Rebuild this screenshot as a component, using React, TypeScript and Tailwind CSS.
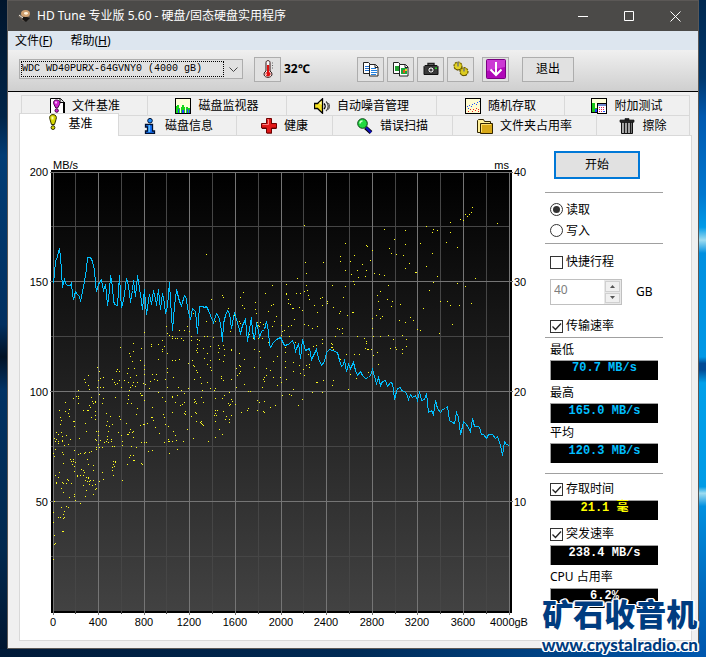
import { useState, type ReactNode } from 'react'
import clsx from 'clsx'

type IconProps = { children: ReactNode; className?: string }

const Icon = ({ children, className }: IconProps) => (
  <svg viewBox="0 0 16 16" className={clsx('h-4 w-4 shrink-0', className)} aria-hidden="true">
    {children}
  </svg>
)

const FileBenchIcon = () => (
  <Icon>
    <path d="M1.5.5h10l3 3v12h-13z" fill="#fff" stroke="#000" />
    <path d="M11 .5v4h4" fill="#ddd" stroke="#000" />
    <path d="M15.5 4v11.500H3" fill="none" stroke="#000" />
    <path d="M7.500 2C4.500 2 4 4.500 5 6.500L6.800 10h1.800L10.500 6.500c1-2 0-4.500-3-4.500z" fill="#d020d0" stroke="#400040" />
    <path d="M6 3.500h2v2H6z" fill="#ffb0ff" />
    <circle cx="7.700" cy="12.600" r="1.700" fill="#d020d0" stroke="#400040" />
  </Icon>
)

const MonitorIcon = () => (
  <Icon>
    <rect x=".5" y=".5" width="15" height="15" fill="#ffffd8" stroke="#000" />
    <g shapeRendering="crispEdges">
      <path d="M1 15V8h1V7h2v3h1v5zM6 15V9h1V7h2v2h1v6zM11 15V9h2v1h2v5z" fill="#18d818" />
      <path d="M3 15v-4h1v4zM7 15v-3h2v3zM12 15v-4h1v4zM14 15v-3h1v3z" fill="#2838ff" />
    </g>
  </Icon>
)

const SpeakerIcon = () => (
  <Icon>
    <path d="M.5 5.500h3L8.500.8v14.400L3.500 10.500h-3z" fill="#f4e020" stroke="#000" strokeWidth="1.300" />
    <path d="M5 5l2.500-2v4z" fill="#fffbb0" />
    <path d="M10 5.500c1.500 1.500 1.500 4 0 5.500" fill="none" stroke="#000" strokeWidth="1.400" />
    <path d="M12 3.500c3 2.500 3 7 0 9.500" fill="none" stroke="#444" strokeWidth="1.300" />
    <path d="M14.500 5c1.300 2 1.300 4.500 0 6.500" fill="none" stroke="#444" />
  </Icon>
)

const RandomIcon = () => (
  <Icon>
    <rect x=".5" y=".5" width="15" height="15" fill="#fffbd0" stroke="#000" />
    <g shapeRendering="crispEdges">
      <path d="M2 8h1v1H2zM4 7h1v1H4zM6 8h1v1H6zM7 6h1v1H7zM9 5h1v1H9zM11 6h1v1h-1zM12 4h1v1h-1zM14 3h1v1h-1zM3 10h1v1H3z" fill="#2050ff" />
      <path d="M3 13h1v1H3zM5 11h1v1H5zM7 13h1v1H7zM8 11h1v1H8zM10 12h1v1h-1zM11 10h1v1h-1zM13 11h1v1h-1zM13 13h1v1h-1z" fill="#f02020" />
    </g>
  </Icon>
)

const ExtraIcon = () => (
  <Icon>
    <rect x=".5" y=".5" width="15" height="14" fill="#ffffd8" stroke="#000" />
    <g shapeRendering="crispEdges">
      <path d="M1 14V5h3v5h2v4z" fill="#18c818" />
      <path d="M4 14v-3h2v3z" fill="#2838ff" />
    </g>
    <rect x="6.500" y="5.500" width="9" height="10" fill="#fff" stroke="#000" />
    <g shapeRendering="crispEdges">
      <path d="M7 6h8v2H7z" fill="#7088d0" />
      <path d="M8 9h1v1H8zM10 9h1v1h-1zM12 9h1v1h-1zM8 11h1v1H8zM10 11h1v1h-1zM12 11h1v1h-1zM8 13h1v1H8zM10 13h1v1h-1z" fill="#e02060" />
      <path d="M12 13h2v1h-2z" fill="#2050ff" />
    </g>
  </Icon>
)

const BulbIcon = () => (
  <Icon className="-mt-1">
    <path d="M8 .6C5 .6 4 3 5 5.500l1.500 5h3l1.500-5C12 3 11 .6 8 .6z" fill="#d8d800" stroke="#303000" />
    <path d="M6.500 2.500h2v3h-2z" fill="#ffffb0" />
    <circle cx="8" cy="13.600" r="1.900" fill="#d8d800" stroke="#303000" />
  </Icon>
)

const InfoIcon = () => (
  <Icon>
    <circle cx="8" cy="2.700" r="2.300" fill="#2090ff" stroke="#001030" />
    <path d="M3.500 6.500h7v6.500h2v2.500h-9V13h2V9h-2z" fill="#1878ff" stroke="#001030" strokeWidth="1.300" />
    <path d="M6.500 7H8v7H6.500z" fill="#60c0ff" />
  </Icon>
)

const HealthIcon = () => (
  <Icon>
    <path d="M6 1.500h5v4.500h4.500v5H11v4.500H6V11H1V6h5z" fill="#400000" />
    <path d="M5.500.5h5v5h5v4.500h-5v5h-5v-5h-5V5.500h5z" fill="#e01818" stroke="#700000" />
    <path d="M6.500 1.500h1v5h-6" fill="none" stroke="#ff8080" />
  </Icon>
)

const ScanIcon = () => (
  <Icon>
    <path d="M8.500 9.500l5.500 5" stroke="#000" strokeWidth="4" />
    <path d="M9 9.500l5 5" stroke="#1010c0" strokeWidth="2.400" />
    <circle cx="5.500" cy="5.500" r="4.800" fill="#20d840" stroke="#064010" />
    <path d="M3 5.500C3 4 4 3 5.500 3" fill="none" stroke="#c8ffc8" strokeWidth="1.500" />
  </Icon>
)

const FolderIcon = () => (
  <Icon>
    <path d="M.5 14.500v-12l1-1h5l1 2h6v11z" fill="#fff09a" stroke="#302400" />
    <path d="M3.500 15.500v-10h12v10z" fill="#d8a818" stroke="#302400" />
    <path d="M4.500 14V6.500H14" fill="none" stroke="#ffe070" />
  </Icon>
)

const TrashIcon = () => (
  <Icon>
    <path d="M2.500 4h11v11.500h-11z" fill="#8c8c8c" stroke="#111" />
    <path d="M5.500 4v11M8.500 4v11M11.500 4v11" stroke="#1c1c1c" strokeWidth="1.400" />
    <path d="M4 5v10M7 5v10M10 5v10" stroke="#d0d0d0" />
    <path d="M1 2h14v2.200H1zM6 .6h4V2H6z" fill="#2c2c2c" stroke="#111" strokeWidth=".7" />
  </Icon>
)

const ThermoIcon = () => (
  <svg viewBox="1 0 14 18" className="h-[18px] w-[14px] shrink-0" aria-hidden="true">
    <path d="M6 11V2.500c0-2.500 4-2.500 4 0V11c3.500 2.500 2 6.300-2 6.300S2.500 13.500 6 11z" fill="#f8f8f8" stroke="#301010" />
    <path d="M7 5h2.200v7c2.300 1 1.600 4.400-1.200 4.400s-3.500-3.400-1-4.400z" fill="#e01010" />
    <path d="M5.500 13.500h1.500v1.500H5.500z" fill="#ffb0b0" />
    <path d="M12 3h1M12 5.500h1M12 8h1" stroke="#666" />
  </svg>
)

const CopyTextIcon = () => (
  <Icon>
    <path d="M.5 1.500h5l2 2v9h-7z" fill="#fff" stroke="#222" />
    <path d="M2 5.500h4M2 7.500h4M2 9.500h4" stroke="#2070d0" />
    <path d="M6.500 3.500h6l2.500 2.500v9h-8.500z" fill="#fff" stroke="#222" />
    <path d="M8 7.500h5M8 9.500h6M8 11.500h6M8 13.500h5" stroke="#2080e0" />
    <path d="M12 3.500v3h3" fill="none" stroke="#222" />
  </Icon>
)

const CopyImageIcon = () => (
  <Icon>
    <path d="M.5 1.500h5l2 2v9h-7z" fill="#fff" stroke="#222" />
    <path d="M2 5h5v5H2z" fill="#20a030" />
    <path d="M6.500 3.500h6l2.500 2.500v9h-8.500z" fill="#fff" stroke="#222" />
    <path d="M8 7h6v6H8z" fill="#18a838" />
    <path d="M10 9h2v3h-2z" fill="#e05020" />
    <path d="M12 8h2v2h-2z" fill="#f0d020" />
    <path d="M12 3.500v3h3" fill="none" stroke="#222" />
  </Icon>
)

const CameraIcon = () => (
  <Icon>
    <path d="M5 4.500V2.500h6v2" fill="#777" stroke="#222" strokeWidth="1.400" />
    <path d="M1 5.500l1-1h12l1 1v8H1z" fill="#3a3a3a" stroke="#111" />
    <circle cx="8" cy="9" r="3.200" fill="#f4f4f4" stroke="#111" />
    <circle cx="8" cy="9" r="1.600" fill="#444" />
    <path d="M12 6.500h2v1.500h-2z" fill="#20d020" />
  </Icon>
)

const OptionsIcon = () => (
  <Icon>
    <circle cx="5" cy="5" r="4" fill="#d0c010" stroke="#706000" strokeDasharray="2 1" strokeWidth="1.200" />
    <circle cx="5" cy="5.500" r="3" fill="#e4d428" />
    <circle cx="11" cy="10.500" r="4" fill="#c8b810" stroke="#706000" strokeDasharray="2 1" strokeWidth="1.200" />
    <circle cx="11" cy="11" r="3" fill="#dccc20" />
    <path d="M5 1v4.500M11 7v3.500" stroke="#777" strokeWidth="1.500" />
    <path d="M2 7.500c1 1.500 4 2 5.500.5M8 13.500c1 1.300 4 1.800 6 0" fill="none" stroke="#605000" />
  </Icon>
)

const DownIcon = () => (
  <svg viewBox="0 0 20 20" className="h-5 w-5 shrink-0" aria-hidden="true">
    <rect x=".5" y=".5" width="19" height="19" rx="1" fill="#b008b8" stroke="#780080" />
    <path d="M1 1h18v7L1 12z" fill="#cc38d4" />
    <path d="M10 3v12M4.500 10.500l5.500 5.500 5.500-5.500" fill="none" stroke="#fff" strokeWidth="2" />
  </svg>
)

const AppIcon = () => (
  <Icon className="ml-[9px]">
    <path d="M1 8l5-3 7 3-3 4-4 1z" fill="#6c6258" />
    <path d="M7 8l6 2-4 4-4-3z" fill="#181614" />
    <ellipse cx="8.500" cy="5.500" rx="4.500" ry="3.500" fill="#cfa070" />
    <ellipse cx="9" cy="5.300" rx="2" ry="1.400" fill="#fff3de" />
    <path d="M2 7l4 3" stroke="#efe8de" />
  </Icon>
)

// Samples are stored in thirds of a pixel, each block relative to its own origin
type Block = { x: number; y: number; points: string }

const transferBlocks: Block[] = [
  {
    x: -12,
    y: -18,
    points:
      '101,400 107,335 112,318 116,305 118,296 121,318 124,365 127,411 130,398 133,388 137,400 142,406 150,406 154,401 158,430 161,447 166,424 172,434 177,438 181,454 186,425 193,395 198,355 202,323 210,322 216,335 223,358 227,400 230,424 235,402 239,397 243,388 247,405 251,422 256,404 259,430 262,467 267,420 271,376 276,410 280,450 284,463 292,466 298,376 301,430 304,472 309,450 314,430 319,385 326,405 331,458 336,420 341,391 346,440 352,376 358,415 363,455 367,478 373,418 376,460 379,494 384,450 389,432 395,464 400,422 406,445 409,465 415,418 421,479 427,430 432,460 437,490 441,470 448,396 452,450 458,540 463,470 470,419 477,455 483,465 492,436 498,445 503,475 511,508 518,475 525,485 532,551 538,470 548,468 553,471 558,468 565,480 572,495 581,517 585,500 590,490 596,500 600,520 607,575 611,520 616,495 623,480 628,490 635,536 643,488 650,508 655,530 661,550 668,525 676,508 679,540 683,575 687,535 693,502 698,545 703,567 710,517 714,540 718,563 724,545 732,537 739,515 744,545 749,583',
  },
  {
    x: 738,
    y: -18,
    points:
      '2,593 9,577 20,568 30,562 36,575 44,585 54,582 62,578 66,570 72,585 77,605 84,581 92,626 97,568 105,600 118,596 124,627 131,615 139,598 146,625 154,647 162,635 169,606 178,598 188,600 202,606 208,630 213,650 219,643 224,628 229,665 236,642 241,655 250,637 256,662 262,675 271,664 278,675 285,685 294,683 300,675 307,657 313,680 319,700 325,683 332,706 338,694 347,690 353,710 360,697 366,700 371,720',
  },
  {
    x: 738,
    y: 702,
    points:
      '374,28 378,5 382,-6 390,-8 393,0 404,3 410,10 416,28 422,12 428,22 437,15 442,30 448,5 453,30 464,27 470,10 475,66 484,62 490,74 497,30 503,55 511,66 518,58 526,55 532,49 539,92 548,98 554,100 559,68 565,82 571,132 576,110 581,95 590,103 600,123 607,86 613,108 625,108 629,113 635,134 641,134 649,145 655,132 668,132 676,145 683,139 690,165 697,196 703,155 710,163 717,166',
  },
]

const accessBlocks: Block[] = [
  {
    x: -12,
    y: -18,
    points:
      '559,313 574,448 607,436 610,442 626,475 670,427 661,442 737,430 706,457 667,466 673,475 706,478 709,489 745,484 520,490 535,517 586,514 559,514 610,514 643,496 661,520 712,517 721,517 730,524 715,526 658,515 373,547 439,529 502,529 478,541 493,541 508,544 442,550 448,556 457,559 427,571 457,565 466,565 472,565 484,565 490,570 514,559 514,571 532,568 538,571 553,559 562,559 580,562 631,544 688,553 703,562 700,565 715,565 727,565 745,577 718,529 340,580 394,583 394,589 415,583 301,592 364,595 427,597 433,589 427,604 328,611 331,619 340,604 337,634 361,631 373,646 373,659 415,628 442,610 457,631 466,631 478,628 505,640 517,631 520,646 523,649 532,583 532,595 529,601 532,607 550,595 562,610 571,589 553,625 571,631 595,586 598,594 610,586 613,598 634,598 613,616 634,601 595,607 598,628 610,634 562,643 571,652 574,661 658,610 673,628 658,646 661,649 649,655 703,598 718,604 721,622 739,655 703,652 232,652 238,664 292,658 298,664 289,664 325,655 343,655 349,676 442,655 442,667 205,676 193,688 196,697 235,691 241,685 250,682 277,688 283,697 286,703 292,700 298,691 313,691 322,670 331,682 340,697 325,697 352,697 373,673 397,673 409,673 403,688 412,691 376,703 460,682 436,688 391,694 532,667 529,661 523,688 544,700 562,697 541,682 604,679 604,685 610,691 634,688 652,676 658,670 673,703 661,664 730,688 733,682 739,676 733,694 206,706 208,718 232,712 241,712 250,712 304,712 331,712 337,706 346,709 370,700 388,715 442,712 475,712 505,715 571,715 586,715 649,712 727,712',
  },
  {
    x: 738,
    y: -18,
    points:
      '103,226 343,238 406,241 469,229 490,238 502,241 487,247 541,217 541,247 571,208 580,211 586,193 592,199 598,193 604,187 607,172 682,220 226,280 289,286 292,289 307,301 358,295 373,268 406,283 451,280 529,277 562,292 364,310 379,313 400,316 487,310 211,319 211,334 253,316 241,334 277,343 301,331 106,337 160,337 109,370 418,340 406,355 469,349 226,361 262,361 289,361 244,373 265,382 286,379 313,370 328,373 343,376 436,367 439,367 502,379 490,397 82,385 250,394 253,403 226,409 187,406 355,406 7,406 49,403 109,406 49,430 49,433 79,430 91,430 103,424 112,421 115,436 118,448 55,448 55,460 61,463 67,475 70,475 88,472 97,481 10,463 4,466 19,499 13,514 7,529 133,466 151,445 157,442 172,454 172,460 157,466 142,487 190,472 220,442 211,484 208,490 232,496 247,487 250,487 331,424 322,436 325,454 352,448 367,454 364,469 328,478 319,496 337,499 331,505 307,505 391,463 388,511 406,517 421,502 430,511 460,475 478,421 511,454 532,454 541,466 568,466 604,460 562,400 586,409 616,385 547,523 508,550 451,541 442,538 73,508 64,526 55,529 34,526 43,541 37,544 34,556 58,559 103,523 115,526 127,535 142,529 202,535 208,538 217,535 217,550 196,559 262,559 283,565 289,574 289,580 286,595 292,598 295,598 304,598 307,535 310,559 331,559 355,556 370,568 376,592 379,598 397,556 409,568 409,589 397,598 397,610 361,595 322,607 310,616 325,643 268,613 253,613 229,613 211,628 184,580 187,583 187,592 184,592 190,598 157,568 157,580 130,589 139,586 115,613 118,643 118,652 109,646 88,646 70,637 70,664 91,670 103,676 100,658 46,607 46,634 46,652 46,592 22,619 10,634 1,661 10,682 31,682 34,697 22,706 49,688 142,697 160,691 190,691 187,706 241,673 259,685 295,667 70,718 235,718 76,577 13,574 139,697',
  },
  {
    x: -12,
    y: 702,
    points:
      '175,1 175,19 169,19 175,25 160,25 175,40 190,61 136,37 118,61 136,64 148,58 145,70 148,79 121,82 124,91 121,103 160,94 163,94 163,109 196,100 199,124 178,145 109,127 115,133 124,127 127,139 139,136 103,145 109,148 115,154 115,160 106,154 127,151 127,154 151,148 145,163 133,166 106,178 100,190 103,199 127,187 130,193 130,220 163,181 175,193 181,190 193,190 196,187 208,187 214,184 151,208 154,214 160,208 157,223 163,229 160,214 163,244 166,217 202,208 205,223 220,226 220,241 184,238 190,241 193,247 190,256 181,256 172,256 172,259 199,262 205,262 196,271 202,274 208,274 205,265 211,271 220,271 208,283 217,286 229,295 226,298 226,283 199,301 190,286 220,313 196,319 163,313 163,319 148,322 166,331 181,340 118,247 106,256 115,262 109,277 109,280 127,277 142,268 145,271 139,280 130,280 124,295 154,280 130,307 103,334 100,367 100,397 124,352 139,349 145,352 133,364 130,373 115,382 121,382 133,382 130,385 127,424 130,424 103,436 103,463 106,460 100,508 238,13 214,22 217,34 220,40 226,34 226,37 208,46 211,52 202,61 205,61 226,64 226,76 214,82 226,88 250,25 247,40 286,22 259,70 271,79 262,94 259,106 268,109 265,124 277,103 298,79 301,88 295,127 304,136 307,154 307,166 277,169 283,169 229,124 235,124 235,136 229,151 226,148 238,172 229,178 247,172 229,172 241,151 253,157 262,139 262,148 259,154 265,157 274,148 274,154 235,163 280,214 286,214 280,223 283,229 286,217 277,232 277,241 280,256 247,247 250,268 238,274 307,271 328,1 325,16 325,28 322,40 334,40 352,55 349,73 361,10 364,16 367,16 373,31 397,52 319,100 331,118 328,127 337,127 340,124 325,133 322,133 340,142 361,106 370,103 373,103 382,100 394,82 397,82 400,91 406,112 418,130 364,157 373,157 379,157 334,169 349,172 331,196 328,202 340,196 340,211 343,211 322,223 364,220 367,223 385,184 397,181 415,7 427,22 436,34 430,73 433,82 436,103 445,109 433,157 445,148 445,154 448,154 457,154 448,190 472,178 457,22 457,19 466,37 472,16 481,46 487,43 493,10 484,1 493,37 496,64 496,73 493,70 457,67 460,124 466,136 469,151 502,118 490,154 523,28 526,34 529,40 523,37 526,67 529,70 514,79 520,145 529,94 544,94 547,103 544,100 541,97 550,106 547,1 544,22 550,37 565,154 583,1 586,25 607,25 613,16 586,61 592,61 586,70 583,76 589,76 586,94 610,64 616,88 619,79 625,40 628,46 631,43 634,28 637,34 628,7 628,97 628,88 634,76 646,43 664,67 685,4 691,4 685,55 682,61 712,31 718,37 733,34 712,61 730,64 733,67 598,118 607,133 586,142',
  },
  { x: 738, y: 702, points: '1,52 16,46 37,16 58,13 64,16 85,46 97,28 127,7 157,7' },
]

const expand = (blocks: Block[]) =>
  blocks.flatMap(({ x, y, points }) =>
    points.split(' ').map((pair) => {
      const [px, py] = pair.split(',').map(Number)
      return [Math.floor((px + x) / 3), Math.floor((py + y) / 3)]
    })
  )

const transferRate = expand(transferBlocks)
const accessTime = expand(accessBlocks)

const gridX = [29, 51, 74, 97, 120, 142, 165, 188, 211, 234, 257, 279, 302, 325, 348, 371, 393, 416, 439, 462, 485]
const gridY = [16, 70, 125, 180, 235, 290, 345, 400]

const BenchmarkChart = () => (
  <svg viewBox="0 0 506 480" className="block h-auto w-full" role="img" aria-label="MB/s / ms">
    <defs>
      <linearGradient id="plot" x1="0" y1="0" x2="0" y2="1">
        <stop offset="0" stopColor="#000" />
        <stop offset="1" stopColor="#424242" />
      </linearGradient>
    </defs>
    <g shapeRendering="crispEdges">
      <rect x="27" y="14" width="461" height="443" fill="#000" />
      <rect x="29" y="16" width="457" height="439" fill="url(#plot)" />
      {gridX.map((x, i) => i % 2 === 1 && <rect key={x} x={x} y="16" width="1" height="442" fill="#464646" />)}
      {gridY.map((y, i) => i % 2 === 1 && <rect key={y} x="27" y={y} width="459" height="1" fill="#464646" />)}
      {gridX.map((x, i) => i % 2 === 0 && <rect key={x} x={x} y="16" width="1" height="443" fill="#757575" />)}
      {gridY.map((y, i) => i % 2 === 0 && <rect key={y} x="26" y={y} width="463" height="1" fill="#757575" />)}
      {accessTime.map(([x, y], i) => (
        <rect key={i} x={x} y={y} width="1" height="1" fill="#ffff20" />
      ))}
    </g>
    <polyline
      points={transferRate.map(([x, y]) => `${x + 0.5},${y + 0.5}`).join(' ')}
      fill="none"
      stroke="#00bfff"
      shapeRendering="crispEdges"
    />
    <g className="font-['Liberation_Sans',sans-serif] text-[11px]" fill="#000">
      <text x="29" y="13">MB/s</text>
      <text x="485" y="13" textAnchor="end">ms</text>
      {[200, 150, 100, 50].map((v, i) => (
        <text key={v} x="24" y={20 + i * 110} textAnchor="end">{v}</text>
      ))}
      {[40, 30, 20, 10].map((v, i) => (
        <text key={v} x="490" y={20 + i * 110}>{v}</text>
      ))}
      {[0, 400, 800, 1200, 1600, 2000, 2400, 2800, 3200, 3600].map((v, i) => (
        <text key={v} x={gridX[i * 2]} y="470" textAnchor="middle">{v}</text>
      ))}
      <text x="485" y="470" textAnchor="middle">4000gB</text>
    </g>
  </svg>
)

const Tab = ({ icon, label, first }: { icon: ReactNode; label: string; first?: boolean }) => (
  <button
    type="button"
    className={clsx(
      'flex h-5 items-center justify-center gap-[7px] border-t border-r border-[#d9d9d9] bg-[#f0f0f0] whitespace-nowrap',
      first && 'border-l'
    )}
  >
    {icon}
    {label}
  </button>
)

const ToolButton = ({ label, children, className }: { label: string; children: ReactNode; className?: string }) => (
  <button
    type="button"
    aria-label={label}
    className={clsx(
      'flex h-[25px] w-[27px] shrink-0 items-center justify-center border border-[#adadad] bg-[#e1e1e1]',
      className
    )}
  >
    {children}
  </button>
)

const Check = ({ label, defaultChecked }: { label: string; defaultChecked?: boolean }) => (
  <label className="relative flex h-5 items-center gap-[3px] pl-[5px]">
    <input
      type="checkbox"
      defaultChecked={defaultChecked}
      className="peer h-[13px] w-[13px] appearance-none border border-[#333] bg-white"
    />
    <svg
      viewBox="0 0 13 13"
      className="pointer-events-none absolute top-1 left-[5px] hidden h-[13px] w-[13px] peer-checked:block"
      aria-hidden="true"
    >
      <path d="M2.500 6.500l3 3L11 3.500" fill="none" stroke="#222" strokeWidth="1.300" />
    </svg>
    {label}
  </label>
)

const Readout = ({ children, className }: { children: ReactNode; className: string }) => (
  <output
    className={clsx(
      "ml-[5px] block h-5 w-[108px] border-t border-l border-[#a0a0a0] bg-black text-center font-['Liberation_Mono','Noto_Sans_CJK_SC',monospace] text-[12px]/[14px] font-bold whitespace-pre",
      className
    )}
  >
    {children}
  </output>
)

const Rate = ({ label, value, className }: { label: string; value: string; className?: string }) => (
  <div className={className}>
    <div className="mb-[3px] h-4 pl-[5px] leading-[18px]">{label}</div>
    <Readout className="text-[#00bfff]">{value}</Readout>
  </div>
)

export default function App() {
  const [mode, setMode] = useState<'read' | 'write'>('read')

  return (
    <div className="relative flex min-h-screen flex-col bg-[#002f5f] font-['Noto_Sans','Noto_Sans_CJK_SC',sans-serif] text-[12px]/[16px] text-black">
      <div className="flex flex-1">
        <div className="w-[7px] shrink-0 bg-[linear-gradient(#00152c,#002448_18%,#003c75_24%,#002f60_50%,#001226_55%,#003264_60%,#00284e_85%,#001630)]" />

        <div className="flex min-w-0 flex-1 flex-col border border-[#5b5856] bg-[#f0f0f0]">
          <header className="flex h-[30px] items-center bg-[#4b4a48] text-white">
            <AppIcon />
            <h1 className="ml-1 flex-1 text-[12px]/[16px] whitespace-nowrap">HD Tune 专业版 5.60 - 硬盘/固态硬盘实用程序</h1>
            <button type="button" aria-label="最小化" className="flex h-full w-[46px] items-center justify-center">
              <svg viewBox="0 0 11 11" className="h-[11px] w-[11px]"><path d="M0 5.500h10" stroke="#fff" /></svg>
            </button>
            <button type="button" aria-label="最大化" className="flex h-full w-[46px] items-center justify-center">
              <svg viewBox="0 0 11 11" className="h-[11px] w-[11px]"><path d="M.5.5h9v9h-9z" fill="none" stroke="#fff" /></svg>
            </button>
            <button type="button" aria-label="关闭" className="flex h-full w-[46px] items-center justify-center">
              <svg viewBox="0 0 11 11" className="h-[11px] w-[11px]"><path d="M.5.5l10 10M10.500.5l-10 10" stroke="#fff" /></svg>
            </button>
          </header>

          <nav className="flex h-[19px] items-center gap-[18px] bg-[#dde6ef] pl-1.5">
            <button type="button" className="pl-px">文件(<u>F</u>)</button>
            <button type="button">帮助(<u>H</u>)</button>
          </nav>

          <div className="flex h-[42px] items-center border-b border-black bg-linear-to-b from-[#f0f0f0] to-[#cfcfcf] pb-[3px] pl-[11px]">
            <div className="relative h-5 w-[224px] shrink-0 border border-[#adadad] bg-[#e1e1e1] p-px">
              <select
                aria-label="硬盘"
                className="block h-4 w-[203px] appearance-none border border-dotted border-black bg-transparent font-['Liberation_Mono',monospace] text-[10px]/[14px]"
              >
                <option>WDC WD40PURX-64GVNY0 (4000 gB)</option>
              </select>
              <svg viewBox="0 0 9 5" className="pointer-events-none absolute top-[7px] right-1 h-[5px] w-[9px]">
                <path d="M.5.5l4 4 4-4" fill="none" stroke="#444" />
              </svg>
            </div>
            <ToolButton label="温度" className="ml-[11px]"><ThermoIcon /></ToolButton>
            <span className="w-[76px] shrink-0 pl-[3px] font-bold">32℃</span>
            <div className="flex gap-[3px]">
              <ToolButton label="复制文本"><CopyTextIcon /></ToolButton>
              <ToolButton label="复制图像"><CopyImageIcon /></ToolButton>
              <ToolButton label="截图"><CameraIcon /></ToolButton>
              <ToolButton label="选项"><OptionsIcon /></ToolButton>
            </div>
            <ToolButton label="保存" className="ml-2"><DownIcon /></ToolButton>
            <button type="button" className="ml-[13px] h-[25px] w-[52px] shrink-0 border border-[#adadad] bg-[#e1e1e1]">
              退出
            </button>
          </div>

          <main className="flex flex-1 flex-col pt-[3px] pr-1.5 pb-[7px] pl-[11px]">
            <div className="mr-[2px] ml-[2px] grid grid-cols-[127fr_139fr_150fr_128fr_125fr]">
              <Tab first icon={<FileBenchIcon />} label="文件基准" />
              <Tab icon={<MonitorIcon />} label="磁盘监视器" />
              <Tab icon={<SpeakerIcon />} label="自动噪音管理" />
              <Tab icon={<RandomIcon />} label="随机存取" />
              <Tab icon={<ExtraIcon />} label="附加测试" />
            </div>
            <div className="mr-[2px] grid grid-cols-[100fr_118fr_96fr_120fr_144fr_93fr]">
              <button
                type="button"
                className="z-10 -mt-[2px] -mb-px flex items-center justify-center gap-[7px] border-t border-r border-l border-[#d9d9d9] bg-white pb-[2px]"
              >
                <BulbIcon />
                基准
              </button>
              <Tab icon={<InfoIcon />} label="磁盘信息" />
              <Tab icon={<HealthIcon />} label="健康" />
              <Tab icon={<ScanIcon />} label="错误扫描" />
              <Tab icon={<FolderIcon />} label="文件夹占用率" />
              <Tab icon={<TrashIcon />} label="擦除" />
            </div>

            <section className="flex flex-1 items-start border border-[#d9d9d9] bg-white pr-7 pl-1">
              <div className="min-w-0 flex-1 pt-5">
                <BenchmarkChart />
              </div>

              <aside className="ml-[15px] w-[118px] shrink-0 pt-[15px]">
                <button type="button" className="ml-[9px] h-7 w-[86px] border-2 border-[#0078d7] bg-[#e1e1e1]">
                  开始
                </button>

                <fieldset className="mt-[13px] border-t border-[#a0a0a0] pt-[6px]">
                  <label className="flex h-[21px] items-center gap-[3px] pl-[5px]">
                    <input
                      type="radio"
                      name="mode"
                      checked={mode === 'read'}
                      onChange={() => setMode('read')}
                      className="h-[13px] w-[13px] appearance-none rounded-full border border-[#333] bg-white p-[2px] checked:bg-[#333] checked:bg-clip-content"
                    />
                    读取
                  </label>
                  <label className="flex h-[21px] items-center gap-[3px] pl-[5px]">
                    <input
                      type="radio"
                      name="mode"
                      checked={mode === 'write'}
                      onChange={() => setMode('write')}
                      className="h-[13px] w-[13px] appearance-none rounded-full border border-[#333] bg-white p-[2px] checked:bg-[#333] checked:bg-clip-content"
                    />
                    写入
                  </label>
                </fieldset>

                <div className="mt-[2px] border-t border-[#a0a0a0] pt-2">
                  <Check label="快捷行程" />
                  <div className="mt-[7px] flex items-center pl-[5px]">
                    <div className="flex h-[26px] w-[72px] border border-[#c0c0c0]">
                      <input
                        type="text"
                        aria-label="快捷行程 GB"
                        disabled
                        defaultValue="40"
                        className="min-w-0 flex-1 pb-1 pl-[3px] text-[#7d7d7d]"
                      />
                      <div className="flex w-[17px] flex-col gap-px bg-[#e8e8e8] p-px">
                        <button type="button" aria-label="+" disabled className="flex flex-1 items-center justify-center border border-[#d0d0d0] bg-[#f0f0f0]">
                          <svg viewBox="0 0 5 3" className="h-[3px] w-[5px]"><path d="M0 3l2.500-3L5 3z" fill="#555" /></svg>
                        </button>
                        <button type="button" aria-label="-" disabled className="flex flex-1 items-center justify-center border border-[#d0d0d0] bg-[#f0f0f0]">
                          <svg viewBox="0 0 5 3" className="h-[3px] w-[5px]"><path d="M0 0l2.500 3L5 0z" fill="#555" /></svg>
                        </button>
                      </div>
                    </div>
                    <span className="ml-[14px]">GB</span>
                  </div>
                  <div className="mt-[11px]">
                    <Check label="传输速率" defaultChecked />
                  </div>
                </div>

                <div className="mt-px border-t border-[#a0a0a0] pt-[3px]">
                  <Rate label="最低" value="70.7 MB/s" />
                  <Rate label="最高" value="165.0 MB/s" className="mt-1" />
                  <Rate label="平均" value="120.3 MB/s" className="mt-px" />
                </div>

                <div className="mt-[10px] border-t border-[#a0a0a0] pt-[5px]">
                  <Check label="存取时间" defaultChecked />
                  <Readout className="mt-px text-[#ffff00]">21.1 毫</Readout>
                  <div className="mt-1">
                    <Check label="突发速率" defaultChecked />
                  </div>
                  <Readout className="mt-px text-white">238.4 MB/s</Readout>
                  <div className="mt-[3px] mb-1 h-4 pl-[5px] leading-[18px]">CPU 占用率</div>
                  <Readout className="text-white">6.2%</Readout>
                </div>
              </aside>
            </section>
          </main>
        </div>

        <div className="w-[7px] shrink-0 bg-[linear-gradient(#00284f,#00386e_12%,#0059b0_18%,#0078d0_30%,#009be8_35%,#9fdcf0_37%,#0090e0_39%,#0098e6_55%,#004c96_56%,#004c96_57%,#00a0ea_59%,#009be6_75%,#9fdcf0_76%,#0090e0_78%,#006cc0_90%,#0059b0)]" />
      </div>
      <div className="h-2 bg-linear-to-r from-[#001a38] via-[#002a55] to-[#0059b0]" />

      <div className="absolute right-2 bottom-0 flex flex-col items-center text-[#003c80] [text-shadow:1px_0_#fff,-1px_0_#fff,0_1px_#fff,0_-1px_#fff,1px_1px_#fff,-1px_-1px_#fff,1px_-1px_#fff,-1px_1px_#fff,2px_0_#fff,-2px_0_#fff]">
        <span className="text-[31px]/[38px] font-black">矿石收音机</span>
        <a href="#" className="font-['Lato',sans-serif] text-[17px]/[24px] font-black">www.crystalradio.cn</a>
      </div>
    </div>
  )
}
